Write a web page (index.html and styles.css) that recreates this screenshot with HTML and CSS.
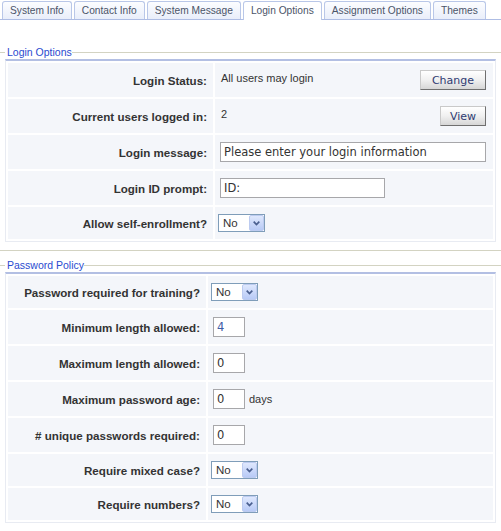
FILE: index.html
```html
<!DOCTYPE html>
<html>
<head>
<meta charset="utf-8">
<link rel="stylesheet" href="styles.css">
</head>
<body>
<div class="tabs">
  <span class="tab">System Info</span>
  <span class="tab">Contact Info</span>
  <span class="tab">System Message</span>
  <span class="tab active">Login Options</span>
  <span class="tab">Assignment Options</span>
  <span class="tab">Themes</span>
</div>

<fieldset class="group group-login">
  <legend>Login Options</legend>
  <table class="form">
    <tr>
      <th>Login Status:</th>
      <td><div class="field top"><span class="text">All users may login</span><button class="btn btn-change">Change</button></div></td>
    </tr>
    <tr>
      <th>Current users logged in:</th>
      <td><div class="field top"><span class="text">2</span><button class="btn btn-view">View</button></div></td>
    </tr>
    <tr>
      <th>Login message:</th>
      <td><div class="field"><input class="input input-wide" type="text" value="Please enter your login information"></div></td>
    </tr>
    <tr>
      <th>Login ID prompt:</th>
      <td><div class="field"><input class="input input-mid" type="text" value="ID:"></div></td>
    </tr>
    <tr>
      <th>Allow self-enrollment?</th>
      <td><div class="field"><span class="select"><span class="select-value">No</span><span class="select-btn"><svg width="7" height="5" viewBox="0 0 7 5"><path d="M0.7 0.7 L3.5 3.6 L6.3 0.7" fill="none" stroke="#4a5f8f" stroke-width="1.7"/></svg></span></span></div></td>
    </tr>
  </table>
</fieldset>

<fieldset class="group group-password">
  <legend>Password Policy</legend>
  <table class="form">
    <tr>
      <th>Password required for training?</th>
      <td><div class="field"><span class="select"><span class="select-value">No</span><span class="select-btn"><svg width="7" height="5" viewBox="0 0 7 5"><path d="M0.7 0.7 L3.5 3.6 L6.3 0.7" fill="none" stroke="#4a5f8f" stroke-width="1.7"/></svg></span></span></div></td>
    </tr>
    <tr>
      <th>Minimum length allowed:</th>
      <td><div class="field"><input class="input input-small blue" type="text" value="4"></div></td>
    </tr>
    <tr>
      <th>Maximum length allowed:</th>
      <td><div class="field"><input class="input input-small" type="text" value="0"></div></td>
    </tr>
    <tr>
      <th>Maximum password age:</th>
      <td><div class="field"><input class="input input-small" type="text" value="0"><span class="unit">days</span></div></td>
    </tr>
    <tr>
      <th># unique passwords required:</th>
      <td><div class="field"><input class="input input-small" type="text" value="0"></div></td>
    </tr>
    <tr>
      <th>Require mixed case?</th>
      <td><div class="field"><span class="select"><span class="select-value">No</span><span class="select-btn"><svg width="7" height="5" viewBox="0 0 7 5"><path d="M0.7 0.7 L3.5 3.6 L6.3 0.7" fill="none" stroke="#4a5f8f" stroke-width="1.7"/></svg></span></span></div></td>
    </tr>
    <tr>
      <th>Require numbers?</th>
      <td><div class="field"><span class="select"><span class="select-value">No</span><span class="select-btn"><svg width="7" height="5" viewBox="0 0 7 5"><path d="M0.7 0.7 L3.5 3.6 L6.3 0.7" fill="none" stroke="#4a5f8f" stroke-width="1.7"/></svg></span></span></div></td>
    </tr>
  </table>
</fieldset>
</body>
</html>
```
FILE: styles.css
```css
body {
  margin: 0;
  background: #fff;
  color: #333;
  font: 11px "Liberation Sans", Arial, sans-serif;
}

/* Tabs */
.tabs {
  display: flex;
  align-items: flex-end;
  gap: 2px;
  height: 20px;
  box-sizing: border-box;
  padding: 1px 0 0 2px;
  border-bottom: 1px solid #aebde4;
}
.tab {
  height: 18px;
  box-sizing: border-box;
  line-height: 17px;
  padding: 0 7px;
  border: 1px solid #b9c7e8;
  border-bottom: none;
  border-radius: 3px 3px 0 0;
  background: linear-gradient(#fcfdff, #e9eefa);
  font-size: 10.2px;
  color: #4b5468;
  white-space: nowrap;
}
.tab.active {
  height: 19px;
  margin-bottom: -1px;
  background: #fff;
}

/* Fieldsets */
.group {
  margin: 0;
  padding: 1px 5px 8px;
  border: 0;
  border-top: 1px solid #d3d3c2;
  border-bottom: 1px solid #d3d3c2;
  min-width: 0;
}
.group-login {
  margin-top: 26px;
}
.group-password {
  margin-top: 8px;
}
.group legend {
  margin: 0;
  padding: 0 0 0 2px;
  font-size: 10.5px;
  line-height: 12px;
  color: #2a4bd0;
}

/* Form table */
.form {
  width: 100%;
  border-collapse: separate;
  border-spacing: 2px;
  border: 1px solid #e8ebf2;
  border-top: 2px solid #b3bfe3;
}
.form th,
.form td {
  background: #f4f6fa;
}
.form th {
  text-align: right;
  vertical-align: middle;
  font-weight: bold;
  font-size: 11.6px;
  color: #333;
  white-space: nowrap;
  padding: 7px 6px 7px 0;
}
.group-login th {
  width: 202px;
}
.group-password th {
  width: 192px;
}
.form td {
  vertical-align: top;
  padding: 7px 7px 7px 5px;
}

.field {
  display: flex;
  align-items: center;
  gap: 4px;
}
.field.top {
  align-items: flex-start;
  justify-content: space-between;
}
.text {
  line-height: 17px;
  padding-left: 1px;
}
.unit {
  line-height: 13px;
}

/* Buttons */
.btn {
  height: 20px;
  box-sizing: border-box;
  padding: 0;
  border: 1px solid;
  border-color: #c9c9c9 #6f6f6f #6f6f6f #c9c9c9;
  background: linear-gradient(#ffffff, #f0f0f0 50%, #d6d6d6);
  font: 11px "DejaVu Sans", Verdana, sans-serif;
  color: #2f3b72;
}
.btn-change {
  width: 66px;
}
.btn-view {
  width: 46px;
}

/* Inputs */
.input {
  height: 20px;
  box-sizing: border-box;
  margin: 0;
  padding: 0 3px;
  border: 1px solid #a7a7aa;
  background: #fff;
  font: 11.5px "DejaVu Sans", Verdana, sans-serif;
  color: #333;
}
.input-wide {
  width: 266px;
}
.input-mid {
  width: 165px;
}
.input-small {
  width: 32px;
}
.input.blue {
  color: #3d5ca6;
}

/* Select */
.select {
  display: inline-flex;
  align-items: center;
  width: 47px;
  height: 18px;
  box-sizing: border-box;
  margin-left: -2px;
  padding-left: 4px;
  border: 1px solid #7f9db9;
  background: #fff;
  font-size: 11.5px;
  color: #333;
}
.select-value {
  flex: 1;
}
.select-btn {
  display: flex;
  align-items: center;
  justify-content: center;
  width: 15px;
  height: 16px;
  box-sizing: border-box;
  border: 1px solid #bccbf0;
  border-radius: 2px;
  background: linear-gradient(#dfe8fd, #b8caf6);
}
```
